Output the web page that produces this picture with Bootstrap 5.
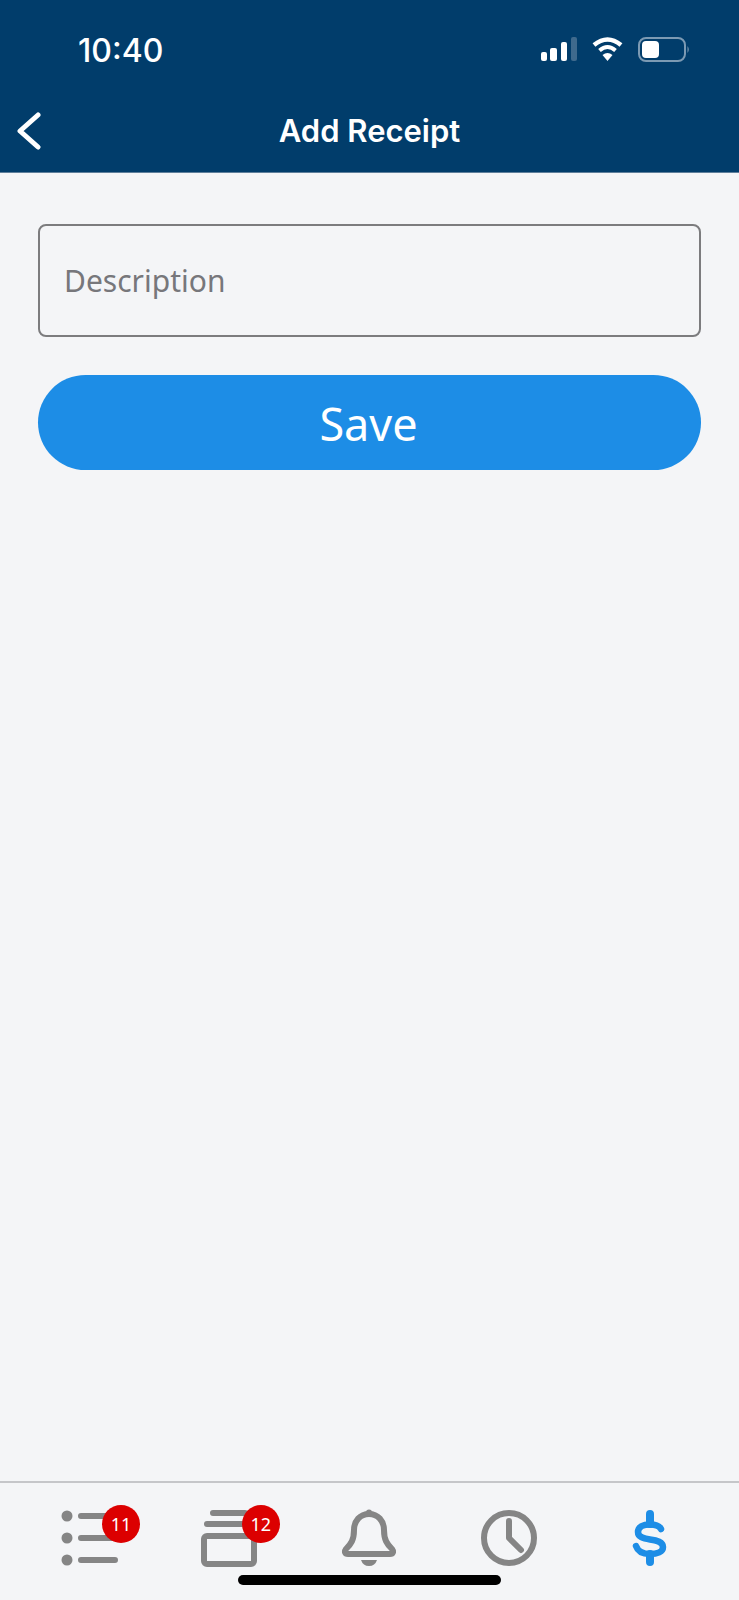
<!DOCTYPE html>
<html lang="en">
<head>
  <meta charset="UTF-8">
  <meta name="viewport" content="width=device-width, initial-scale=1.0">
  <title>Add Receipt</title>
  <link href="https://cdn.jsdelivr.net/npm/bootstrap@5.3.2/dist/css/bootstrap.min.css" rel="stylesheet">
  <style>
    body { background: #f4f5f7; font-family: "Noto Sans", sans-serif; }
    .app-shell { height: 1600px; }
    .app-header { height: 173px; background: #013d6b; border-bottom: 1px solid #5f7f9b; font-family: Inter, sans-serif; }
    .status-row { height: 87px; padding: 12px 49px 0 78px; }
    .status-time { font-size: 32px; font-weight: 500; line-height: 1; padding-top: 2px; }
    .title-row { display: grid; grid-template-columns: 60px 1fr 60px; height: 85px; padding-top: 3px; }
    .page-title { font-size: 31px; font-weight: 600; margin: 0; }
    .back-link { padding-left: 15px; }
    .form-area { padding: 51px 38px 0; }
    .desc-input { height: 113px; padding: 0 24px; font-size: 30px; color: #333; background: transparent; border: 2px solid #7c7c7e; border-radius: 8px; }
    .desc-input::placeholder { color: #77777b; opacity: 1; }
    .save-btn { height: 95px; margin-top: 38px; padding: 2px 2px 0 0; font-size: 45px; line-height: 1; color: #fff; background: #1d8de6; border: 0; border-radius: 48px; }
    .tab-strip { height: 119px; padding: 20px 20px 0; border-top: 2px solid #c5c6c9; }
    .tab-slot { width: 140px; height: 70px; }
    .count-pill { top: 2px; left: 82px; width: 38px; height: 38px; padding: 0; font-size: 18px; font-weight: 400; line-height: 38px; background: #dc0000; }
    .home-bar { left: 238px; bottom: 15px; width: 263px; height: 10px; background: #000; border-radius: 5px; }
  </style>
</head>
<body>
  <div class="app-shell d-flex flex-column position-relative overflow-hidden">
    <header class="app-header text-white">
      <div class="status-row d-flex justify-content-between align-items-center">
        <span class="status-time">10:40</span>
        <svg width="150" height="30" viewBox="0 0 150 30" fill="none">
          <rect x="1" y="17" width="6" height="9" rx="2" fill="#fff"/>
          <rect x="10" y="13" width="7" height="13" rx="2" fill="#fff"/>
          <rect x="21" y="7" width="6" height="19" rx="2" fill="#fff"/>
          <rect x="31" y="2" width="6" height="24" rx="2" fill="#3f6a8d"/>
          <path d="M54 10 Q67.500 -1 81 10" stroke="#fff" stroke-width="4.500"/>
          <path d="M59.500 15.500 Q67.500 8.500 75.500 15.500" stroke="#fff" stroke-width="4"/>
          <path d="M62.500 20 Q67.500 16 72.500 20 L67.500 26 Z" fill="#fff"/>
          <rect x="99" y="3" width="46" height="23" rx="7" stroke="#7c9ab3" stroke-width="2"/>
          <rect x="102" y="6" width="17" height="17" rx="4" fill="#fff"/>
          <path d="M147.500 11 q2.500 3.500 0 7 z" fill="#7c9ab3"/>
        </svg>
      </div>
      <div class="title-row align-items-center">
        <a href="#" class="back-link d-flex" aria-label="Back">
          <svg width="28" height="38" viewBox="0 0 28 38" fill="none">
            <path d="M23 3 L5 19 L23 35" stroke="#fff" stroke-width="5" stroke-linecap="round" stroke-linejoin="round"/>
          </svg>
        </a>
        <h1 class="page-title text-center">Add Receipt</h1>
      </div>
    </header>

    <main class="form-area flex-grow-1 d-flex flex-column">
      <input type="text" class="form-control desc-input" placeholder="Description">
      <button type="button" class="btn save-btn w-100">Save</button>
    </main>

    <nav class="tab-strip d-flex">
      <div class="tab-slot position-relative d-flex justify-content-center">
        <svg width="70" height="70" viewBox="0 0 70 70" fill="none" stroke="#858585" stroke-width="6" stroke-linecap="round">
          <circle cx="12" cy="13" r="5.500" fill="#858585" stroke="none"/>
          <circle cx="12" cy="35" r="5.500" fill="#858585" stroke="none"/>
          <circle cx="12" cy="57" r="5.500" fill="#858585" stroke="none"/>
          <path d="M26 13 H60 M26 35 H60 M26 57 H60"/>
        </svg>
        <span class="badge rounded-pill count-pill position-absolute">11</span>
      </div>
      <div class="tab-slot position-relative d-flex justify-content-center">
        <svg width="70" height="70" viewBox="0 0 70 70" fill="none" stroke="#858585" stroke-width="6" stroke-linecap="round">
          <path d="M18 10 H50 M12 21 H50"/>
          <rect x="9" y="33" width="50" height="28" rx="3"/>
        </svg>
        <span class="badge rounded-pill count-pill position-absolute">12</span>
      </div>
      <div class="tab-slot d-flex justify-content-center">
        <svg width="70" height="70" viewBox="0 0 70 70" fill="none" stroke="#858585" stroke-width="6" stroke-linecap="round" stroke-linejoin="round">
          <path d="M35 11 C26 11 20 18 20 27 C20 37 17 41 12 46 C10 49 11 51 14 51 H56 C59 51 60 49 58 46 C53 41 50 37 50 27 C50 18 44 11 35 11 Z"/>
          <path d="M35 9.500 V11"/>
          <path d="M27 57 H43 Q41 63 35 63 Q29 63 27 57 Z" fill="#858585" stroke="none"/>
        </svg>
      </div>
      <div class="tab-slot d-flex justify-content-center">
        <svg width="70" height="70" viewBox="0 0 70 70" fill="none" stroke="#858585" stroke-width="6" stroke-linecap="round" stroke-linejoin="round">
          <circle cx="35" cy="35" r="25"/>
          <path d="M35 18 V35 L47 47"/>
        </svg>
      </div>
      <div class="tab-slot d-flex justify-content-center">
        <svg width="70" height="70" viewBox="0 0 70 70" fill="none" stroke="#1d8de6" stroke-width="6.500" stroke-linecap="round" stroke-linejoin="round">
          <path d="M47 26 C45 22 41 21.500 36 21.500 C29 21.500 24 24 24 29 C24 34 29 35.500 36 36.500 C43 37.500 49 39 49 44 C49 49 43 51 36 51 C30 51 24 49 22 43"/>
          <path d="M36 11 V21 M36 51 V59" stroke-width="8"/>
        </svg>
      </div>
    </nav>
    <div class="home-bar position-absolute"></div>
  </div>
  <script src="https://cdn.jsdelivr.net/npm/bootstrap@5.3.2/dist/js/bootstrap.bundle.min.js"></script>
</body>
</html>
